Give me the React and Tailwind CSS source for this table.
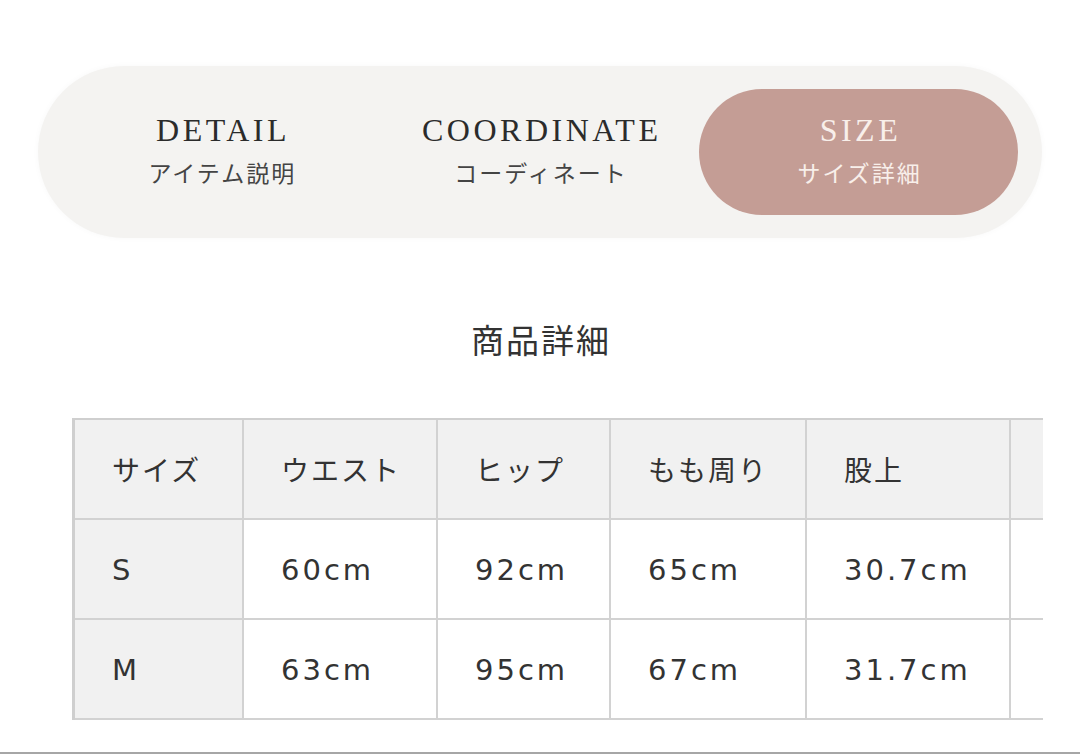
import React from "react";

const tabs = [
  { en: "DETAIL", ja: "アイテム説明", active: false },
  { en: "COORDINATE", ja: "コーディネート", active: false },
  { en: "SIZE", ja: "サイズ詳細", active: true },
];

const widths = [169, 194, 173, 196, 204, 200];
const header = ["サイズ", "ウエスト", "ヒップ", "もも周り", "股上", ""];
const rows = [
  ["S", "60cm", "92cm", "65cm", "30.7cm", ""],
  ["M", "63cm", "95cm", "67cm", "31.7cm", ""],
];

const jp = { fontFamily: '"Noto Sans CJK JP", sans-serif' };
const num = { fontFamily: '"DejaVu Sans", "Noto Sans CJK JP", sans-serif' };

function Cell({ w, shaded, children, isNum }) {
  return (
    <div
      style={{ width: w, ...(isNum ? num : jp) }}
      className={
        "h-[100px] shrink-0 border-r-2 border-b-2 border-[#d2d2d2] flex items-center pl-[37px] text-[#333333] " +
        (shaded ? "bg-[#f1f1f1] " : "bg-white ") +
        (isNum ? "text-[29px] tracking-[3px] pt-[3px]" : "text-[28px] tracking-[2px]")
      }
    >
      {children}
    </div>
  );
}

export default function App() {
  return (
    <div className="w-[1080px] h-[754px] bg-white overflow-hidden flex flex-col">
      <div className="pt-[66px] px-[38px]">
        <div className="h-[172px] rounded-full bg-[#f4f3f1] py-[23px] px-[24px] grid grid-cols-3 shadow-[0_0_6px_rgba(0,0,0,0.03)]">
          {tabs.map((t) => (
            <div
              key={t.en}
              className={
                "rounded-full flex flex-col items-center justify-center pb-[7px] " +
                (t.active ? "bg-[#c49d95] text-[#f8efea]" : "text-[#2b2b2b]")
              }
            >
              <div
                className="text-[32px] leading-[36px] tracking-[3.5px] pl-[3.5px]"
                style={{ fontFamily: '"Liberation Serif", serif' }}
              >
                {t.en}
              </div>
              <div
                className={"mt-[10px] text-[23px] leading-[28px] tracking-[2px] pl-[2px] " + (t.active ? "" : "text-[#444444]")}
                style={jp}
              >
                {t.ja}
              </div>
            </div>
          ))}
        </div>
      </div>

      <div
        className="mt-[83px] h-[36px] text-center text-[33px] leading-[36px] tracking-[2px] pl-[2px] text-[#333333]"
        style={jp}
      >
        商品詳細
      </div>

      <div className="mt-[61px] ml-[72px] w-[971px] overflow-hidden">
        <div className="w-max border-l-[3px] border-t-2 border-[#cfcfcf]">
          <div className="flex">
            {header.map((h, i) => (
              <Cell key={i} w={widths[i]} shaded>
                {h}
              </Cell>
            ))}
          </div>
          {rows.map((r, ri) => (
            <div key={ri} className="flex">
              {r.map((c, i) => (
                <Cell key={i} w={widths[i]} shaded={i === 0} isNum>
                  {c}
                </Cell>
              ))}
            </div>
          ))}
        </div>
      </div>

      <div className="mt-auto h-[2px] bg-[#a6a6a6]" />
    </div>
  );
}
